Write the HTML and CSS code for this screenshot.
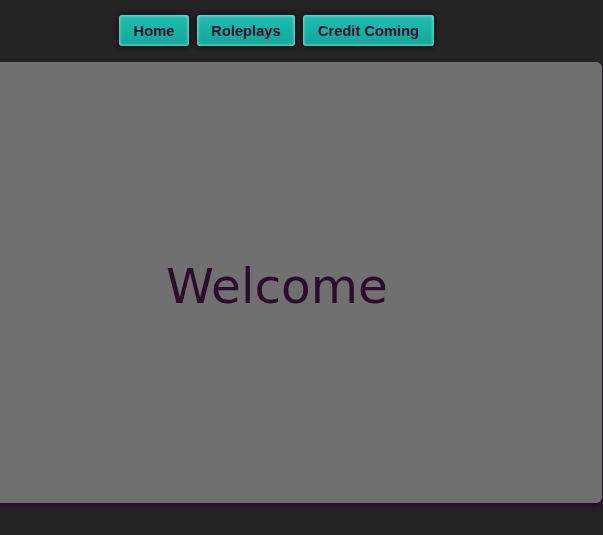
FILE: index.html
```html
<!DOCTYPE html>
<html>
<head>
<meta charset="utf-8">
<link rel="stylesheet" href="styles.css">
</head>
<body>
<nav class="nav">
  <a class="btn" href="#">Home</a>
  <a class="btn" href="#">Roleplays</a>
  <a class="btn" href="#">Credit Coming</a>
</nav>
<main class="panel">
  <h1 class="welcome">Welcome</h1>
</main>
</body>
</html>
```
FILE: styles.css
```css
html, body {
  margin: 0;
  padding: 0;
}
body {
  background: #242424;
  height: 535px;
  overflow: hidden;
}
.nav {
  display: flex;
  gap: 8px;
  padding: 15px 0 0 119px;
  height: 31px;
}
.btn {
  display: flex;
  align-items: center;
  justify-content: center;
  height: 31px;
  box-sizing: border-box;
  padding: 0 10px;
  border-radius: 3px;
  background: linear-gradient(#1fbdb0, #0fa89b);
  box-shadow: inset 0 0 3px 1px rgba(255,255,255,0.45), 0 0 5px 1px #1a0a18;
  color: #2a1030;
  font-family: "Liberation Sans", Arial, sans-serif;
  font-weight: bold;
  font-size: 14.7px;
  text-decoration: none;
}
.nav .btn:nth-child(1) { width: 70px; }
.nav .btn:nth-child(2) { width: 98px; }
.nav .btn:nth-child(3) { width: 131px; }
.panel {
  margin: 16px 0 0 -10px;
  width: 612px;
  height: 441px;
  background: #707070;
  border-radius: 0 6px 6px 0;
  box-shadow: 0 4px 5px #2c0b2a;
  display: flex;
  align-items: center;
}
.welcome {
  margin: 0 0 0 176px;
  padding-top: 6px;
  font-family: "DejaVu Sans", Verdana, sans-serif;
  font-weight: normal;
  font-size: 48.5px;
  color: #2e0a2c;
}
```
